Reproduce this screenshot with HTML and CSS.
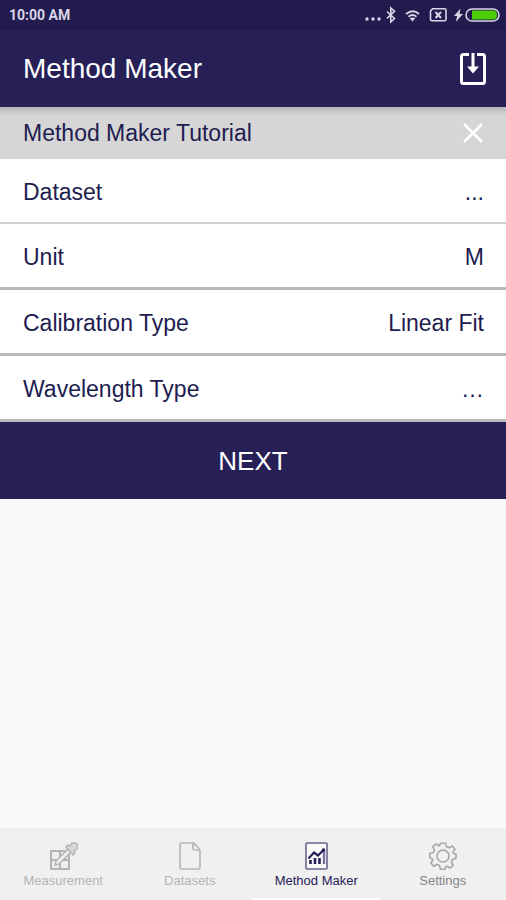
FILE: index.html
```html
<!DOCTYPE html>
<html lang="en">
<head>
<meta charset="utf-8">
<meta name="viewport" content="width=device-width, initial-scale=1">
<title>Method Maker</title>
<link rel="stylesheet" href="styles.css">
</head>
<body>
<div class="app">
  <div class="status">
    <span>10:00 AM</span>
    <svg width="140" height="18" viewBox="0 0 140 18" fill="none" stroke="#d8d6e6" stroke-width="1.6" aria-hidden="true">
      <g fill="#d8d6e6" stroke="none"><circle cx="3" cy="13" r="1.700"/><circle cx="9" cy="13" r="1.700"/><circle cx="15" cy="13" r="1.700"/></g>
      <path d="M23 5.500l7.500 7-3.700 3.500V2l3.700 3.300-7.500 7"/>
      <path d="M42 8q7-5.500 13 0M44.500 10.700q4-3.500 8 0" stroke-width="1.800"/>
      <path d="M45.700 12.300q2.800-1.800 5.600 0L48.500 15.500z" fill="#d8d6e6" stroke="none"/>
      <path d="M68.500 2.800h12q1.500 0 1.500 1.500v9q0 1.500-1.500 1.500H68q-1.500 0-1.500-1.500V5z"/>
      <path d="M71.500 6l5.500 6M77 6L71.500 12" stroke-width="2"/>
      <path d="M96.500 2.500l-6.500 7.500h3.200l-1.500 6 7.300-8h-3.500z" fill="#d8d6e6" stroke="none"/>
      <rect x="102" y="3" width="33" height="12" rx="6"/>
      <path d="M108 4.500h21q4 0 4 4.500t-4 4.500h-21z" fill="#4dcc08" stroke="none"/>
    </svg>
  </div>
  <header class="header">
    <h1>Method Maker</h1>
    <button class="icon-button" type="button" aria-label="Save">
      <svg width="28" height="34" viewBox="0 0 28 34" fill="none" stroke="#fff" stroke-width="3" aria-hidden="true">
        <path d="M10 2.500H4.500q-2 0-2 2v25q0 2 2 2h19q2 0 2-2v-25q0-2-2-2H18M14 1v16"/>
        <path d="M8 14.500h12L14 21.500z" fill="#fff" stroke="none"/>
      </svg>
    </button>
  </header>
  <main>
    <div class="tutorial">
      <span>Method Maker Tutorial</span>
      <button class="icon-button" type="button" aria-label="Close">
        <svg width="20" height="20" viewBox="0 0 20 20" stroke="#fff" stroke-width="2.500" aria-hidden="true"><path d="M1 1l18 18M19 1L1 19"/></svg>
      </button>
    </div>
    <button class="row light" type="button"><span>Dataset</span><span>...</span></button>
    <button class="row" type="button"><span>Unit</span><span>M</span></button>
    <button class="row" type="button"><span>Calibration Type</span><span>Linear Fit</span></button>
    <button class="row" type="button"><span>Wavelength Type</span><span>…</span></button>
    <button class="next" type="button">NEXT</button>
  </main>
  <nav class="tabs">
    <a class="tab" href="#measurement">
      <svg width="30" height="30" viewBox="0 0 30 30" fill="none" stroke="#b5b5b5" stroke-width="1.500" stroke-linejoin="round" aria-hidden="true">
        <path d="M3 10h18v18H3z" fill="#b5b5b5" stroke-width="2"/>
        <g fill="#f0f0f0" stroke="none"><rect x="4" y="11" width="7" height="7" rx="1"/><rect x="13" y="11" width="7" height="7" rx="1"/><rect x="4" y="20" width="7" height="7" rx="1"/><rect x="13" y="20" width="7" height="7" rx="1"/></g>
        <path d="M7 24l1-4L20 8l3 3-12 12-4 1z" fill="#f0f0f0"/>
        <path d="M18 6l2-2 2 1 2-3q3-1 5 1t0 5l-3 2 1 2-2 2z" fill="#d8d8d8"/>
      </svg>
      Measurement
    </a>
    <a class="tab" href="#datasets">
      <svg width="30" height="30" viewBox="0 0 30 30" fill="none" stroke="#b5b5b5" stroke-width="1.600" aria-hidden="true">
        <path d="M6.500 2H19l6 7v17.500q0 1.500-1.500 1.500h-17Q5 28 5 26.500v-23Q5 2 6.500 2zM18 2v5q0 2 2 2h5"/>
      </svg>
      Datasets
    </a>
    <a class="tab active" href="#method-maker" aria-current="page">
      <svg width="30" height="30" viewBox="0 0 30 30" fill="none" stroke="#262057" aria-hidden="true">
        <rect x="5" y="2" width="21" height="26" rx="1" fill="#fafafa" stroke="#68648c" stroke-width="1.600"/>
        <path d="M9.500 23v-4M14 23v-6M18.500 23v-6" stroke-width="2.600"/>
        <path d="M23 23V10" stroke="#77739a" stroke-width="2.400"/>
        <path d="M7.500 17.500l5.500-6 4 3 6-6" stroke-width="2.200"/>
        <circle cx="22.500" cy="9" r="1.800" fill="#262057" stroke="none"/>
      </svg>
      Method Maker
    </a>
    <a class="tab settings" href="#settings">
      <svg width="30" height="30" viewBox="-15 -15 30 30" fill="none" stroke="#a6a6a6" stroke-width="1.600" stroke-linejoin="round" aria-hidden="true">
        <path d="M-2.500-12.800H2.500L3.500-9.300 6-8.200 9.200-10 12-7 10-3.800 10.600-2.500 13-1.800V2.500L9.500 3.500 8.400 6.200 10.200 9.200 7.200 12 4 10.200 2.800 10.800 1.800 13.200H-2.500L-3.500 9.500-6.200 8.400-9.200 10.200-12 7.200-10.200 4-10.800 2.800-13.200 1.800V-2.500L-9.500-3.500-8.400-6.200-10.200-9.200-7.200-12-4-10.200-3.300-10.500z"/>
        <circle r="6"/>
      </svg>
      Settings
    </a>
  </nav>
</div>
</body>
</html>
```

FILE: styles.css
```css
* {
  box-sizing: border-box;
}

body {
  margin: 0;
  background: #fafafa;
  color: #211c50;
  font-family: "Liberation Sans", Arial, sans-serif;
}

button {
  border: 0;
  padding: 0;
  font: inherit;
  color: inherit;
  cursor: pointer;
}

svg {
  display: block;
}

.app {
  display: flex;
  flex-direction: column;
  min-height: 100vh;
}

main {
  display: flex;
  flex: 1;
  flex-direction: column;
}

.status {
  display: flex;
  align-items: center;
  justify-content: space-between;
  height: 30px;
  padding: 0 2px 0 9px;
  background: #211b4e;
  color: #d8d6e6;
  font: bold 14px "Roboto", sans-serif;
}

.header {
  display: flex;
  align-items: center;
  justify-content: space-between;
  height: 77px;
  padding: 0 19px 0 23px;
  background: #262057;
  color: #fff;
}

h1 {
  margin: 0;
  font-size: 28px;
  font-weight: normal;
}

.icon-button {
  background: none;
}

.tutorial {
  display: flex;
  align-items: center;
  justify-content: space-between;
  height: 52px;
  padding: 0 23px;
  background: linear-gradient(#b4b4b8, #d6d6d6 8px);
  font-size: 23px;
}

.row {
  display: flex;
  align-items: center;
  justify-content: space-between;
  height: 66px;
  padding: 3px 22px 0 23px;
  border-bottom: 3px solid #b9b9b9;
  background: #fff;
  font-size: 23px;
}

.row.light {
  height: 65px;
  border-bottom: 2px solid #d0d0d0;
}

.next {
  height: 77px;
  padding-top: 2px;
  background: #262057;
  color: #fff;
  font-size: 26px;
}

.tabs {
  display: grid;
  grid-template-columns: repeat(4, 1fr);
  height: 72px;
  background: #f0f0f0;
}

.tab {
  display: flex;
  flex-direction: column;
  align-items: center;
  gap: 2px;
  padding-top: 13px;
  border-bottom: 2px solid transparent;
  color: #b5b5b5;
  font-size: 13px;
  text-decoration: none;
}

.tab.active {
  border-color: #fff;
  color: #262057;
}

.tab.settings {
  color: #858585;
}
```
